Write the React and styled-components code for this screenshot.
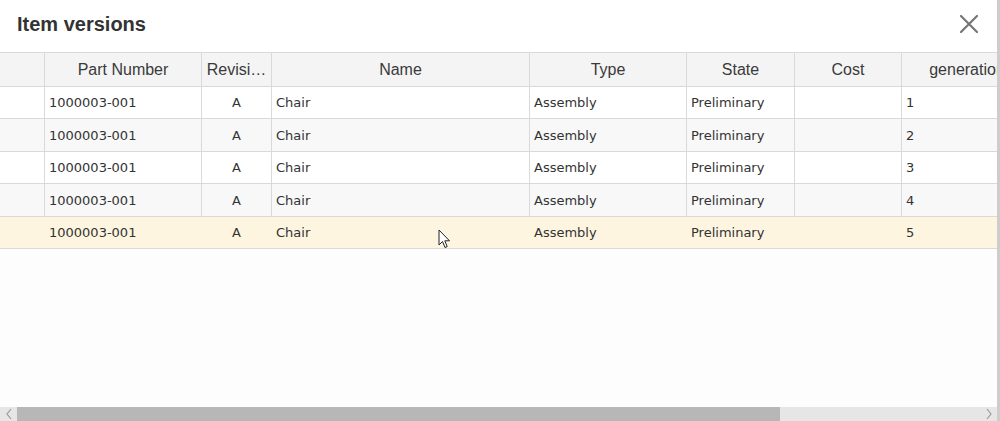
import React from 'react'
import styled, { createGlobalStyle } from 'styled-components';

const GlobalStyle = createGlobalStyle`
  html, body {
    margin: 0;
    padding: 0;
    background: #ffffff;
  }
  #root {
    width: 1000px;
    height: 421px;
  }
`;

const Dialog = styled.div`
  width: 1000px;
  height: 421px;
  box-sizing: border-box;
  border-right: 3px solid #cdcdcd;
  background: #ffffff;
  display: flex;
  flex-direction: column;
  overflow: hidden;
  position: relative;
`;

const TitleBar = styled.div`
  height: 52px;
  flex: none;
  display: flex;
  align-items: center;
  justify-content: space-between;
  padding: 0 18px 4px 17px;
  box-sizing: border-box;
`;

const Title = styled.h1`
  margin: 0;
  font-family: "Liberation Sans", Arial, sans-serif;
  font-size: 20px;
  font-weight: bold;
  color: #333333;
`;

const CloseButton = styled.button`
  border: 0;
  background: transparent;
  padding: 0;
  width: 20px;
  height: 20px;
  display: flex;
  align-items: center;
  justify-content: center;
  cursor: pointer;
`;

const Grid = styled.div`
  flex: 1;
  display: flex;
  flex-direction: column;
  background: #fdfdfd;
  overflow: hidden;
`;

const Row = styled.div`
  display: flex;
  flex: none;
  height: ${p => p.h}px;
  box-sizing: border-box;
  border-bottom: 1px solid #d9d9d9;
  background: ${p => p.bg};
`;

const HeaderRow = styled(Row)`
  border-top: 1px solid #d9d9d9;
`;

const HeadCell = styled.div`
  flex: none;
  width: ${p => p.w}px;
  box-sizing: border-box;
  border-right: 1px solid #d9d9d9;
  display: flex;
  align-items: center;
  justify-content: center;
  font-family: "Liberation Sans", Arial, sans-serif;
  font-size: 16px;
  color: #3a3a3a;
  white-space: nowrap;
  overflow: hidden;
  &:last-child {
    border-right: 0;
  }
`;

const Cell = styled.div`
  flex: none;
  width: ${p => p.w}px;
  box-sizing: border-box;
  border-right: 1px solid ${p => (p.plain ? 'transparent' : '#d9d9d9')};
  display: flex;
  align-items: center;
  justify-content: ${p => (p.center ? 'center' : 'flex-start')};
  padding: 0 4px;
  font-family: "DejaVu Sans", Tahoma, sans-serif;
  font-size: 13px;
  color: #333333;
  white-space: nowrap;
  overflow: hidden;
  &:last-child {
    border-right: 0;
  }
`;

const Filler = styled.div`
  flex: 1;
`;

const ScrollBar = styled.div`
  height: 14px;
  flex: none;
  display: flex;
  align-items: stretch;
  background: #e6e6e6;
`;

const ScrollArrow = styled.div`
  width: 17px;
  flex: none;
  display: flex;
  align-items: center;
  justify-content: center;
`;

const Thumb = styled.div`
  width: 763px;
  flex: none;
  background: #b7b7b7;
`;

const Track = styled.div`
  flex: 1;
`;

const Pointer = styled.svg`
  position: absolute;
  left: 438px;
  top: 229px;
`;

const columns = [
  { key: 'sel', label: '', w: 45 },
  { key: 'part', label: 'Part Number', w: 157 },
  { key: 'rev', label: 'Revisi…', w: 70, center: true },
  { key: 'name', label: 'Name', w: 258 },
  { key: 'type', label: 'Type', w: 157 },
  { key: 'state', label: 'State', w: 108 },
  { key: 'cost', label: 'Cost', w: 107 },
  { key: 'gen', label: 'generation', w: 130 },
];

const rows = [1, 2, 3, 4, 5].map(n => ({
  sel: '',
  part: '1000003-001',
  rev: 'A',
  name: 'Chair',
  type: 'Assembly',
  state: 'Preliminary',
  cost: '',
  gen: String(n),
}));

const rowHeights = [32, 33, 32, 33, 32];

const App = () => {
  return (
    <>
      <GlobalStyle />
      <Dialog>
        <TitleBar>
          <Title>Item versions</Title>
          <CloseButton aria-label="Close">
            <svg width="18" height="18" viewBox="0 0 18 18">
              <path d="M1 1 L17 17 M17 1 L1 17" stroke="#767676" strokeWidth="2.2" strokeLinecap="round" />
            </svg>
          </CloseButton>
        </TitleBar>
        <Grid>
          <HeaderRow h={35} bg="#f4f4f4">
            {columns.map(c => (
              <HeadCell key={c.key} w={c.w}>{c.label}</HeadCell>
            ))}
          </HeaderRow>
          {rows.map((r, i) => {
            const selected = i === 4;
            const bg = selected ? '#fdf5e0' : i % 2 === 1 ? '#f8f8f8' : '#ffffff';
            return (
              <Row key={i} h={rowHeights[i]} bg={bg}>
                {columns.map(c => (
                  <Cell key={c.key} w={c.w} center={c.center} plain={selected}>
                    {r[c.key]}
                  </Cell>
                ))}
              </Row>
            );
          })}
          <Filler />
          <ScrollBar>
            <ScrollArrow>
              <svg width="8" height="12" viewBox="0 0 8 12">
                <path d="M6 1 L2 6 L6 11" fill="none" stroke="#9a9a9a" strokeWidth="1.2" />
              </svg>
            </ScrollArrow>
            <Thumb />
            <Track />
            <ScrollArrow>
              <svg width="8" height="12" viewBox="0 0 8 12">
                <path d="M2 1 L6 6 L2 11" fill="none" stroke="#9a9a9a" strokeWidth="1.2" />
              </svg>
            </ScrollArrow>
          </ScrollBar>
        </Grid>
        <Pointer width="13" height="20" viewBox="0 0 13 20">
          <path d="M1 1 L1 16 L4.5 12.5 L7 18.5 L9.2 17.6 L6.8 11.8 L11.5 11.8 Z" fill="#ffffff" stroke="#222222" strokeWidth="1" strokeLinejoin="round" />
        </Pointer>
      </Dialog>
    </>
  )
}

export default App
